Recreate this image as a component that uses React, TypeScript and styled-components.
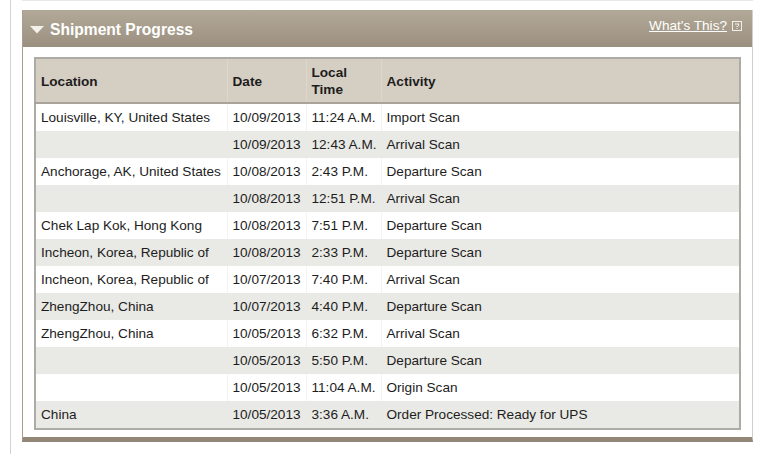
import React from "react";
import styled, { createGlobalStyle } from "styled-components";

const GlobalStyle = createGlobalStyle`
  html, body { margin: 0; padding: 0; background: #ffffff; }
  body { font-family: "Liberation Sans", Arial, Helvetica, sans-serif; }
`;

const Page = styled.div`
  padding-left: 10px;
  height: 454px;
  box-sizing: border-box;
`;

const Frame = styled.div`
  border-left: 1px solid #d6d3cd;
  height: 454px;
  padding-left: 11px;
  box-sizing: border-box;
  width: 743px;
`;

const TopRule = styled.div`
  height: 1px;
  background: #e9e8e6;
  margin-bottom: 9px;
`;

const Panel = styled.section`
  border-left: 1px solid #a89e8f;
  border-right: 1px solid #d2cfca;
  border-bottom: 5px solid #938878;
`;

const Header = styled.header`
  height: 37px;
  display: flex;
  align-items: center;
  justify-content: space-between;
  padding: 0 10px 0 7px;
  background: linear-gradient(#b3a998, #9b907f);
`;

const Title = styled.h2`
  margin: 2px 0 0;
  display: flex;
  align-items: center;
  gap: 6px;
  font-size: 15.6px;
  font-weight: bold;
  color: #ffffff;
`;

const HelpLink = styled.a`
  display: flex;
  align-items: center;
  gap: 5px;
  font-size: 13.6px;
  color: #ffffff;
  margin-top: -6px;
  text-decoration: none;
  span {
    text-decoration: underline;
  }
`;

const Body = styled.div`
  padding: 10px 10px 7px 11px;
  background: #ffffff;
`;

const Table = styled.table`
  width: 707px;
  border-collapse: collapse;
  border: 2px solid #adaba6;
  font-size: 13.6px;
  color: #1d1d1d;
  table-layout: fixed;
`;

const HeadRow = styled.tr`
  background: #d5cec2;
  border-bottom: 2px solid #a8a49c;
`;

const Th = styled.th<{ $w?: number }>`
  box-sizing: border-box;
  ${(p) => (p.$w ? `width: ${p.$w}px;` : "")}
  height: 45px;
  text-align: left;
  font-weight: bold;
  padding: 1px 4px 0 5px;
  line-height: 17px;
  border-left: 1px solid #dcd6cc;
  &:first-child { border-left: none; }
`;

const Row = styled.tr<{ $alt: boolean }>`
  background: ${(p) => (p.$alt ? "#e9e9e5" : "#ffffff")};
  & > td {
    border-left: 1px solid ${(p) => (p.$alt ? "#e9e9e5" : "#f3f3f1")};
  }
  & > td:first-child {
    border-left: none;
  }
`;

const Td = styled.td`
  height: 27px;
  padding: 0 4px 0 5px;
  white-space: nowrap;
`;

const rows = [
  ["Louisville, KY, United States", "10/09/2013", "11:24 A.M.", "Import Scan"],
  ["", "10/09/2013", "12:43 A.M.", "Arrival Scan"],
  ["Anchorage, AK, United States", "10/08/2013", "2:43 P.M.", "Departure Scan"],
  ["", "10/08/2013", "12:51 P.M.", "Arrival Scan"],
  ["Chek Lap Kok, Hong Kong", "10/08/2013", "7:51 P.M.", "Departure Scan"],
  ["Incheon, Korea, Republic of", "10/08/2013", "2:33 P.M.", "Departure Scan"],
  ["Incheon, Korea, Republic of", "10/07/2013", "7:40 P.M.", "Arrival Scan"],
  ["ZhengZhou, China", "10/07/2013", "4:40 P.M.", "Departure Scan"],
  ["ZhengZhou, China", "10/05/2013", "6:32 P.M.", "Arrival Scan"],
  ["", "10/05/2013", "5:50 P.M.", "Departure Scan"],
  ["", "10/05/2013", "11:04 A.M.", "Origin Scan"],
  ["China", "10/05/2013", "3:36 A.M.", "Order Processed: Ready for UPS"],
];

export default function App() {
  return (
    <>
      <GlobalStyle />
      <Page>
        <Frame>
          <TopRule />
          <Panel>
            <Header>
              <Title>
                <svg width="14" height="8" viewBox="0 0 14 8">
                  <polygon points="0,0 14,0 7,7.5" fill="#f4f1ec" />
                </svg>
                Shipment Progress
              </Title>
              <HelpLink href="#">
                <span>What's This?</span>
                <svg width="10" height="10" viewBox="0 0 10 10">
                  <rect x="0.5" y="0.5" width="9" height="9" fill="none" stroke="#f2eee8" strokeWidth="1" />
                  <rect x="3" y="2.5" width="4" height="1" fill="#f2eee8" />
                  <rect x="6" y="3" width="1" height="2" fill="#f2eee8" />
                  <rect x="4.5" y="5" width="1.5" height="1" fill="#f2eee8" />
                  <rect x="4.5" y="7" width="1" height="1" fill="#f2eee8" />
                </svg>
              </HelpLink>
            </Header>
            <Body>
              <Table>
                <thead>
                  <HeadRow>
                    <Th $w={192}>Location</Th>
                    <Th $w={79}>Date</Th>
                    <Th $w={75}>
                      Local
                      <br />
                      Time
                    </Th>
                    <Th>Activity</Th>
                  </HeadRow>
                </thead>
                <tbody>
                  {rows.map((r, i) => (
                    <Row key={i} $alt={i % 2 === 1}>
                      {r.map((c, j) => (
                        <Td key={j}>{c}</Td>
                      ))}
                    </Row>
                  ))}
                </tbody>
              </Table>
            </Body>
          </Panel>
        </Frame>
      </Page>
    </>
  );
}
